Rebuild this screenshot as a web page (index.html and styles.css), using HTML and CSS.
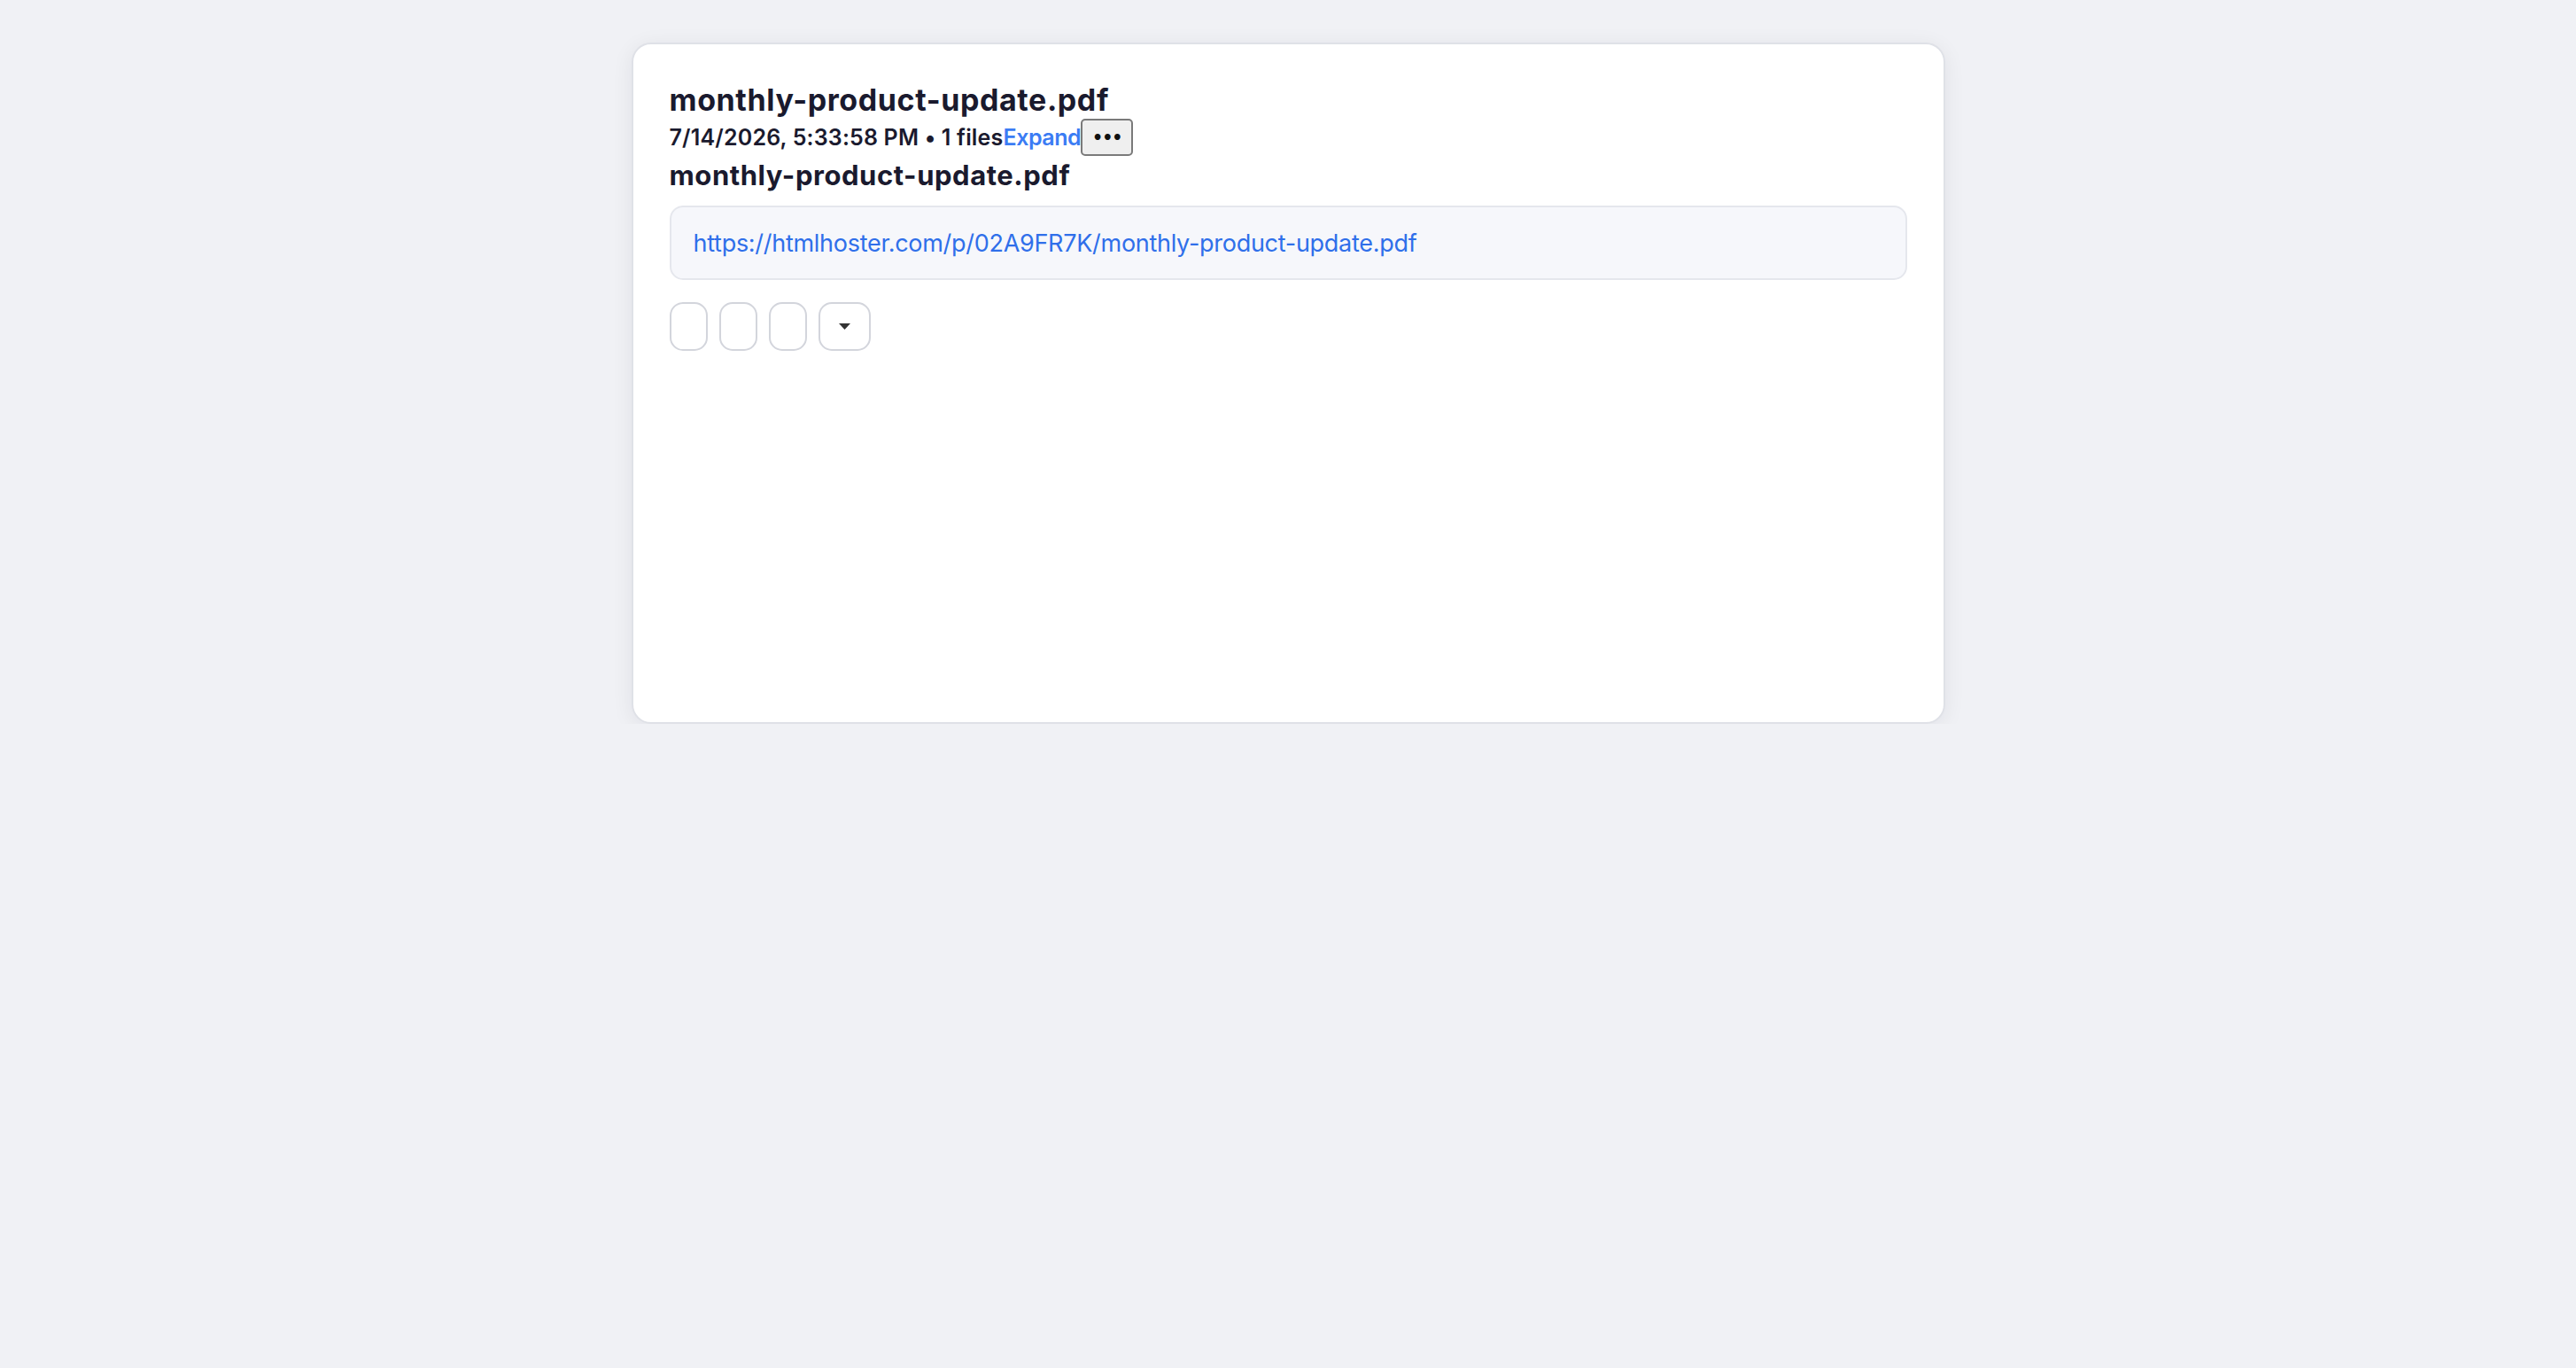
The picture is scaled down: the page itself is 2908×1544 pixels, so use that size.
FILE: index.html
```html
<!DOCTYPE html>
<html lang="en">
<head>
    <meta charset="UTF-8">
    <meta name="viewport" content="width=device-width, initial-scale=1.0">
    <title>monthly-product-update.pdf</title>
    <link rel="stylesheet" href="styles.css">
</head>
<body>
    <div class="card">
        <h1 class="title">monthly-product-update.pdf</h1>

        <div class="meta">
            <span class="meta-text">7/14/2026, 5:33:58 PM • 1 files</span>
            <a class="expand" href="#">Expand</a>
            <button class="more" type="button">•••</button>
        </div>

        <h2 class="file-name">monthly-product-update.pdf</h2>

        <div class="link-box">
            <a href="#">https://htmlhoster.com/p/02A9FR7K/monthly-product-update.pdf</a>
        </div>

        <!-- action buttons -->
        <div class="actions">
            <button class="action" type="button"></button>
            <button class="action" type="button"></button>
            <button class="action" type="button"></button>
            <button class="action action-menu" type="button">
                <svg width="13" height="7" viewBox="0 0 13 7"><path d="M0 0h13L6.5 7z" fill="#333"/></svg>
            </button>
        </div>
    </div>
</body>
</html>
```

FILE: styles.css
```css
* {
    box-sizing: border-box;
    margin: 0;
    padding: 0;
}

body {
    font-family: Inter, "Noto Sans", sans-serif;
    background-color: #f0f1f5;
    color: #1a1a2e;
    padding-top: 48px;
}

.card {
    width: 1483px;
    min-height: 769px;
    margin: 0 auto;
    padding: 41px 41px;
    background: #fff;
    border: 2px solid #dfe1e7;
    border-radius: 22px;
    box-shadow: 0 4px 24px rgba(20, 24, 40, 0.07);
}

.title {
    font-size: 34px;
    line-height: 43px;
    font-weight: 700;
    letter-spacing: 0.6px;
}

.meta {
    display: flex;
    align-items: center;
    height: 42px;
    font-size: 25px;
    font-weight: 600;
}

.meta-text {
    letter-spacing: 0.18px;
}

.expand {
    color: #3b7cf4;
    text-decoration: none;
    letter-spacing: -0.45px;
}

.more {
    width: 59px;
    height: 42px;
    background: #efefef;
    border: 2px solid #7a7a7a;
    border-radius: 5px;
    font-size: 19px;
    font-weight: 700;
    color: #111;
    letter-spacing: -1px;
    font-family: "DejaVu Sans", sans-serif;
}

.file-name {
    font-size: 31px;
    line-height: 43px;
    font-weight: 700;
    letter-spacing: 0.55px;
}

.link-box {
    margin-top: 13px;
    height: 84px;
    padding: 0 25px;
    display: flex;
    align-items: center;
    background: #f6f7fb;
    border: 2px solid #e5e7ed;
    border-radius: 15px;
    font-size: 27px;
    letter-spacing: -0.28px;
}

.link-box a {
    color: #2f6fea;
    text-decoration: none;
}

.actions {
    display: flex;
    gap: 13px;
    margin-top: 25px;
}

.action {
    width: 43px;
    height: 55px;
    background: #fff;
    border: 2px solid #d3d5dc;
    border-radius: 15px;
}

.action-menu {
    width: 59px;
    display: flex;
    align-items: center;
    justify-content: center;
}
```
